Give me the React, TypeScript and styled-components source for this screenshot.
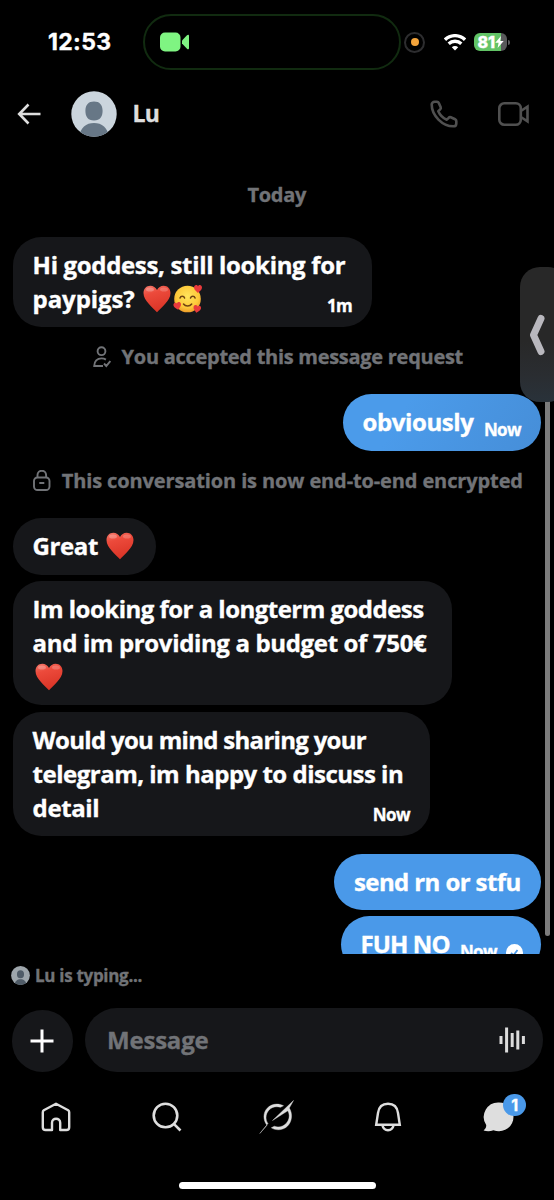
import React from "react";
import styled, { createGlobalStyle } from "styled-components";

const GlobalStyle = createGlobalStyle`
  *, *::before, *::after { box-sizing: border-box; }
  body { margin: 0; background: #000; }
  svg { display: block; flex: none; }
`;

const Screen = styled.div`
  position: relative;
  width: 554px;
  height: 1200px;
  overflow: hidden;
  display: flex;
  flex-direction: column;
  background: #000;
  color: #fff;
  font-family: "Open Sans", "Liberation Sans", sans-serif;
  font-weight: 700;
  -webkit-text-stroke: 0.35px currentColor;
`;

const Label = styled.span<{ $size: number; $track?: number; $color?: string }>`
  font-size: ${(p) => p.$size}px;
  letter-spacing: ${(p) => p.$track ?? 0}px;
  color: ${(p) => p.$color ?? "inherit"};
  white-space: nowrap;
`;

const StatusBar = styled.div`
  display: flex;
  align-items: center;
  height: 84px;
  padding-left: 48px;
`;

const Clock = styled.span`
  width: 95px;
  font: 700 23px/28px Inter, sans-serif;
  letter-spacing: 0.35px;
`;

const Island = styled.div`
  display: flex;
  align-items: center;
  width: 258px;
  height: 56px;
  padding-left: 15px;
  border: 2px solid #112b10;
  border-radius: 28px;
`;

const RecordDot = styled.div`
  display: grid;
  place-items: center;
  width: 21px;
  height: 21px;
  margin: 0 19px 0 3px;
  border: 2px solid #2d2d2f;
  border-radius: 50%;
  &::after {
    content: "";
    width: 8px;
    height: 8px;
    border-radius: 50%;
    background: #f2a33a;
  }
`;

const Battery = styled.div`
  display: flex;
  align-items: center;
  width: 33px;
  height: 18px;
  margin-left: 8px;
  padding-left: 3.5px;
  border-radius: 6px;
  background: linear-gradient(90deg, #62c466 81%, #59595b 81%);
  font: 800 16px/18px Inter, sans-serif;
  letter-spacing: -0.2px;
`;

const BatteryTip = styled.i`
  width: 2px;
  height: 5px;
  margin-left: 1px;
  border-radius: 0 2px 2px 0;
  background: #59595b;
`;

const Header = styled.header`
  display: flex;
  align-items: center;
  height: 60px;
  padding: 0 24px 0 16.5px;
`;

const BackButton = styled.button`
  display: flex;
  width: 54px;
  padding: 0;
  border: 0;
  background: none;
`;

const HeaderName = styled.div`
  flex: 1;
  padding-left: 16px;
  line-height: 30px;
`;

const Chat = styled.main`
  display: flex;
  flex-direction: column;
  height: 810px;
  padding: 33.400px 13px 0 12.600px;
  overflow: hidden;
`;

const Notice = styled.div<{ $bottom: number; $gap?: number; $shift?: number }>`
  display: flex;
  align-items: center;
  justify-content: center;
  gap: ${(p) => p.$gap ?? 0}px;
  flex: none;
  height: 34px;
  margin-bottom: ${(p) => p.$bottom}px;
  padding-left: ${(p) => p.$shift ?? 0}px;
  color: #717377;
`;

const Bubble = styled.div<{ $width: number; $mine?: boolean; $gap?: number; $shade?: boolean }>`
  display: flex;
  align-items: flex-end;
  justify-content: space-between;
  flex: none;
  align-self: ${(p) => (p.$mine ? "flex-end" : "flex-start")};
  width: ${(p) => p.$width}px;
  margin-bottom: ${(p) => p.$gap ?? 6.3}px;
  padding: 11px 20px 11.6px;
  border-radius: 28.4px;
  background: ${(p) => (p.$shade ? "linear-gradient(120deg, #4b9bea 30%, #468ed8)" : p.$mine ? "#4a99e9" : "#16171a")};
`;

const Lines = styled.div`
  display: flex;
  flex-direction: column;
`;

const Line = styled.div<{ $track?: number }>`
  display: flex;
  align-items: center;
  height: 34px;
  font-size: 24px;
  line-height: 34px;
  letter-spacing: ${(p) => p.$track ?? -0.4}px;
  white-space: pre;
`;

const Meta = styled.div<{ $overlap?: number; $outset?: number }>`
  display: flex;
  align-items: center;
  gap: 9px;
  height: 22px;
  margin: 0 ${(p) => -(p.$outset ?? 0)}px -1.6px ${(p) => -(p.$overlap ?? 0)}px;
  font-size: 17px;
  line-height: 22px;
  letter-spacing: -0.6px;
`;

const Typing = styled.div`
  display: flex;
  align-items: center;
  gap: 5px;
  height: 42px;
  padding-left: 11px;
`;

const Composer = styled.div`
  display: flex;
  align-items: flex-start;
  gap: 11.5px;
  height: 76px;
  padding: 12px 0 0 11.5px;
`;

const AddButton = styled.button`
  display: grid;
  place-items: center;
  width: 61.5px;
  height: 61.5px;
  margin-top: 2px;
  padding: 0;
  border: 0;
  border-radius: 50%;
  background: #16171a;
`;

const Field = styled.div`
  display: flex;
  align-items: center;
  justify-content: space-between;
  width: 458px;
  height: 64px;
  padding: 0 17px 0 22.500px;
  border-radius: 32px;
  background: #16171a;
`;

const FieldHint = styled(Label)`
  margin-top: -2px;
`;

const TabBar = styled.nav`
  display: flex;
  height: 109.500px;
  padding: 30px 0 0 1px;
`;

const TabItem = styled.div`
  position: relative;
  display: flex;
  justify-content: center;
  width: 111px;
`;

const Badge = styled.span`
  position: absolute;
  left: 60px;
  top: -8.500px;
  width: 22.500px;
  height: 22.500px;
  border-radius: 50%;
  background: #4a99e9;
  text-align: center;
  font: 700 16px/22.500px Inter, sans-serif;
`;

const HomeIndicator = styled.div`
  width: 197.500px;
  height: 7.500px;
  margin-left: 178.500px;
  border-radius: 4px;
  background: #fff;
`;

const ScrollThumb = styled.div`
  position: absolute;
  top: 300px;
  left: 545px;
  width: 5px;
  height: 636px;
  border-radius: 3px;
  background: #7c7c7c;
`;

const SideHandle = styled.div`
  position: absolute;
  top: 267px;
  left: 520px;
  display: flex;
  align-items: center;
  width: 48px;
  height: 135px;
  padding-left: 9px;
  border-radius: 20px;
  background: linear-gradient(#282828 55%, #2a2d31 80%, #29323a);
`;

const EmojiSlot = styled.span<{ $left?: number }>`
  margin: 0 2px 0 ${(p) => p.$left ?? 2}px;
`;

const HeaderActions = styled.div`
  display: flex;
  align-items: center;
  gap: 40px;
`;

const Avatar = ({ size, dim }: { size: number; dim?: boolean }) => (
  <svg width={size} height={size} viewBox="0 0 46 46" opacity={dim ? 0.78 : 1}>
    <clipPath id={`disc${size}`}><circle cx="23" cy="23" r="22.7" /></clipPath>
    <g clipPath={`url(#disc${size})`}>
      <rect width="46" height="46" fill="#cbd5dd" />
      <path d="M23 10.5c5.500 0 8.600 3.300 8.600 9.300 0 5.800-2.300 9.700-8.600 9.700s-8.600-3.900-8.600-9.700c0-6 3.100-9.300 8.600-9.300z" fill="#677786" />
      <path d="M8.500 46c.4-9.500 6.800-14 14.500-14s14.100 4.500 14.500 14z" fill="#677786" />
    </g>
  </svg>
);

const Heart = ({ left }: { left?: number }) => (
  <EmojiSlot $left={left}>
    <svg width="28" height="28" viewBox="0 0 28 28" role="img" aria-label="red heart">
      <defs>
        <linearGradient id="heartFill" x1="0" y1="0" x2="0.3" y2="1">
          <stop offset="0" stopColor="#f4796b" />
          <stop offset="0.35" stopColor="#ec4a3b" />
          <stop offset="1" stopColor="#db3527" />
        </linearGradient>
      </defs>
      <path d="M14 27.300C10 22.500 0.500 16 0.500 8 .5 3.500 3.600.7 7.300.7c3 0 5.400 1.700 6.700 4.300C15.300 2.400 17.700.7 20.700.7c3.700 0 6.800 2.800 6.800 7.300 0 8-9.500 14.500-13.500 19.300z" fill="url(#heartFill)" />
      <ellipse cx="7" cy="4.500" rx="4" ry="2" fill="#fff" opacity=".25" />
      <ellipse cx="21" cy="4.500" rx="4" ry="2" fill="#fff" opacity=".2" />
    </svg>
  </EmojiSlot>
);

const miniHeart = "M0 4C-1.500 2.300-4 1-4-1.500-4-3-3-3.900-1.900-3.900-1-3.900-.3-3.400 0-2.600.3-3.400 1-3.900 1.900-3.900 3-3.900 4-3 4-1.500 4 1 1.500 2.300 0 4z";

const LovingFace = () => (
  <svg width="30" height="30" viewBox="0 0 30 30" role="img" aria-label="smiling face with hearts">
    <defs>
      <radialGradient id="faceFill" cx=".5" cy=".4" r=".6">
        <stop offset="0" stopColor="#ffe45c" />
        <stop offset="0.7" stopColor="#fdc93a" />
        <stop offset="1" stopColor="#ee9d2a" />
      </radialGradient>
    </defs>
    <circle cx="14.500" cy="15" r="13.300" fill="url(#faceFill)" />
    <g fill="none" stroke="#6f4312" strokeWidth="1.500" strokeLinecap="round">
      <path d="M7 14c.8-2.300 3.800-2.300 4.600 0M17.500 14c.8-2.300 3.800-2.300 4.600 0M10.500 20c2 2.700 6.300 2.700 8.200 0" />
    </g>
    <g fill="#e93a3c">
      <path d={miniHeart} transform="translate(25 5)" />
      <path d={miniHeart} transform="translate(4.500 22) rotate(-12) scale(.95)" />
      <path d={miniHeart} transform="translate(24 25) rotate(12) scale(.95)" />
    </g>
  </svg>
);

export default function App() {
  return (
    <Screen>
      <GlobalStyle />
      <StatusBar>
        <Clock>12:53</Clock>
        <Island>
          <svg width="30" height="20" viewBox="0 0 30 20" fill="#7ff482">
            <rect x="0" y="0.500" width="20.500" height="19" rx="5" />
            <path d="M22 8.500l5-5.200c1-1 2-.6 2 .8v11.800c0 1.400-1 1.800-2 .8l-5-5.200z" />
          </svg>
        </Island>
        <RecordDot />
        <svg width="22" height="17" viewBox="0 0 22 17" fill="none" stroke="#fff" strokeWidth="3.300">
          <path d="M1 5.700a14.300 14.300 0 0 1 20 0" />
          <path d="M4.700 9.800a9 9 0 0 1 12.600 0" />
          <path d="M11 16.500l-3.200-3.200a4.600 4.600 0 0 1 6.400 0z" fill="#fff" stroke="none" />
        </svg>
        <Battery>
          81
          <svg width="9" height="12" viewBox="0 0 9 12"><path d="M6 0L.3 6.800h3.300L2.600 12 8.700 5H5.200z" fill="#fff" /></svg>
        </Battery>
        <BatteryTip />
      </StatusBar>

      <Header>
        <BackButton aria-label="Back">
          <svg width="25" height="22" viewBox="0 0 25 22" fill="none" stroke="#dedede" strokeWidth="2.600">
            <path d="M11.500 1.500L2.200 11l9.300 9.500M2.500 11H23.500" />
          </svg>
        </BackButton>
        <Avatar size={46} />
        <HeaderName><Label $size={23} $track={-0.8} $color="#dedede">Lu</Label></HeaderName>
        <HeaderActions>
          <svg width="28" height="28" viewBox="0 0 28 28" fill="none" stroke="#505050" strokeWidth="2.600" strokeLinejoin="round">
            <path d="M4.600 1.700H7c.8 0 1.500.5 1.800 1.200l1.900 4.300c.3.8.1 1.600-.5 2.100L8.300 11.200c1.500 3.500 4.800 6.900 8.500 8.500l1.900-1.900c.5-.6 1.400-.8 2.100-.5l4.300 1.900c.7.300 1.200 1 1.200 1.800v2.400c0 1.700-1.300 2.900-2.900 2.900C12.500 26.400 1.700 15.500 1.700 4.600c0-1.600 1.300-2.900 2.900-2.900z" />
          </svg>
          <svg width="32" height="24" viewBox="0 0 32 24" fill="none" stroke="#505050" strokeWidth="2.600">
            <rect x="1.300" y="1.300" width="21.500" height="21.400" rx="5" />
            <path d="M22.800 9l6.700-4.300v14.600L22.800 15" />
          </svg>
        </HeaderActions>
      </Header>

      <Chat>
        <Notice $bottom={25.500}><Label $size={20} $track={-0.3}>Today</Label></Notice>
        <Bubble $width={359.500} $gap={12.400}>
          <Lines>
            <Line $track={-0.33}>Hi goddess, still looking for</Line>
            <Line $track={-0.1}>paypigs? <Heart left={2.500} /><LovingFace /></Line>
          </Lines>
          <Meta $overlap={30}>1m</Meta>
        </Bubble>
        <Notice $bottom={20.500} $gap={11} $shift={2}>
          <svg width="18" height="22" viewBox="0 0 18 22" fill="none" stroke="#717377" strokeWidth="1.900">
            <circle cx="8.500" cy="5.200" r="3.900" />
            <path d="M10 20H1.200c0-5 3-7.600 7.300-7.600 1.700 0 3.200.4 4.400 1.200M11 17.500l2.300 2.500 4-5" />
          </svg>
          <Label $size={20} $track={-0.28}>You accepted this message request</Label>
        </Notice>
        <Bubble $width={198.500} $mine $shade $gap={12.500}>
          <Line>obviously</Line><Meta>Now</Meta>
        </Bubble>
        <Notice $bottom={20.500} $gap={11} $shift={2}>
          <svg width="18" height="21" viewBox="0 0 18 21" fill="none" stroke="#717377" strokeWidth="1.900">
            <rect x="1" y="7.500" width="15.500" height="12.500" rx="3.500" />
            <path d="M4.500 7.500V5a4.300 4.300 0 0 1 8.600 0v2.500M6.300 13h5" />
          </svg>
          <Label $size={20} $track={-0.12}>This conversation is now end-to-end encrypted</Label>
        </Notice>
        <Bubble $width={143.800}><Line>Great <Heart left={2} /></Line></Bubble>
        <Bubble $width={439.500}>
          <Lines>
            <Line $track={-0.52}>Im looking for a longterm goddess</Line>
            <Line $track={-0.35}>and im providing a budget of 750€</Line>
            <Line><Heart /></Line>
          </Lines>
        </Bubble>
        <Bubble $width={417.300} $gap={17.200}>
          <Lines>
            <Line $track={-0.7}>Would you mind sharing your</Line>
            <Line $track={-0.5}>telegram, im happy to discuss in</Line>
            <Line>detail</Line>
          </Lines>
          <Meta $overlap={40}>Now</Meta>
        </Bubble>
        <Bubble $width={207} $mine><Line $track={-0.6}>send rn or stfu</Line></Bubble>
        <Bubble $width={200.500} $mine>
          <Line $track={-0.9}>FUH NO</Line>
          <Meta $outset={2}>
            Now
            <svg width="17" height="17" viewBox="0 0 17 17">
              <circle cx="8.500" cy="8.500" r="8.500" fill="#fff" />
              <path d="M5 9l2.500 2.300L11.500 6" fill="none" stroke="#4a99e9" strokeWidth="1.800" />
            </svg>
          </Meta>
        </Bubble>
      </Chat>

      <Typing>
        <Avatar size={19} dim />
        <Label $size={17} $track={-0.3} $color="#717377">Lu is typing...</Label>
      </Typing>

      <Composer>
        <AddButton aria-label="Add attachment">
          <svg width="24" height="24" viewBox="0 0 24 24" stroke="#fff" strokeWidth="3"><path d="M12 .5v23M.5 12h23" /></svg>
        </AddButton>
        <Field>
          <FieldHint $size={24} $track={-0.2} $color="#717377">Message</FieldHint>
          <svg width="27" height="26" viewBox="0 0 27 26" stroke="#dcdcdc" strokeWidth="3">
            <path d="M2 9v8M7.600.5v25M13.200 6v14M18.800 3.500v19M24.400 9v8" />
          </svg>
        </Field>
      </Composer>

      <TabBar>
        <TabItem>
          <svg width="30" height="30" viewBox="0 0 30 30" fill="none" stroke="#dedede" strokeWidth="2.400" strokeLinejoin="round">
            <path d="M1.800 10.200c0-.8.400-1.500 1-1.900L15 1.700l12.200 6.600c.6.400 1 1.100 1 1.900v15c0 1.700-1.100 2.800-2.800 2.800h-6.200v-7.300c0-5.300-8.200-5.300-8.200 0V28H4.600c-1.700 0-2.800-1.100-2.800-2.800z" />
          </svg>
        </TabItem>
        <TabItem>
          <svg width="30" height="30" viewBox="0 0 30 30" fill="none" stroke="#dedede" strokeWidth="2.600">
            <circle cx="13.500" cy="13.500" r="11.800" /><path d="M21.800 21.800l6.700 6.700" />
          </svg>
        </TabItem>
        <TabItem>
          <svg width="36" height="30" viewBox="0 2 36 30" fill="#dedede" stroke="#dedede" strokeWidth=".4" overflow="visible">
            <path d="M.8 33.500L8 25.200C3.800 20 4 12.500 8.200 8.200 12.500 3.700 19 3 24.500 5.700l-3 1.600C17 6 12.500 7 9.700 10.400 6.200 14.500 6.400 20 9 23.500z" />
            <path d="M13.500 20.500L34.500.5 30.300 8c3.700 6 2.700 13.500-1.700 18-4.300 4.200-11 5-16.300 1.800l3-1.600c4.500 1.700 9 .3 12-2.900 3.300-3.800 3.700-8.500 1.500-12.500z" />
          </svg>
        </TabItem>
        <TabItem>
          <svg width="28" height="30" viewBox="0 0 28 30" fill="none" stroke="#dedede" strokeWidth="2.400">
            <path d="M2.200 22.700L4 11C4.800 5 8.600 1.700 14 1.700S23.200 5 24 11l1.800 11.700zM8.300 23c.8 3.500 3 5.200 5.700 5.200s4.900-1.700 5.700-5.200" />
          </svg>
        </TabItem>
        <TabItem>
          <svg width="31" height="30" viewBox="0 0 31 30" fill="#dedede">
            <path d="M16 .5c8.300 0 14.500 6.200 14.500 14.300S24.200 29.300 16 29.300c-2 0-3.900-.4-5.600-1.100-2.800 1.100-6.200 1.300-9.800.3 1.800-1.500 2.800-3.300 2.600-5.500A14.500 14.500 0 0 1 16 .5z" />
          </svg>
          <Badge>1</Badge>
        </TabItem>
      </TabBar>
      <HomeIndicator />

      <ScrollThumb />
      <SideHandle>
        <svg width="16" height="42" viewBox="0 0 16 42" fill="none" stroke="#b9b8be" strokeWidth="7" strokeLinecap="round" strokeLinejoin="round">
          <path d="M12 4.500L4.500 21 12 37.500" />
        </svg>
      </SideHandle>
    </Screen>
  );
}
